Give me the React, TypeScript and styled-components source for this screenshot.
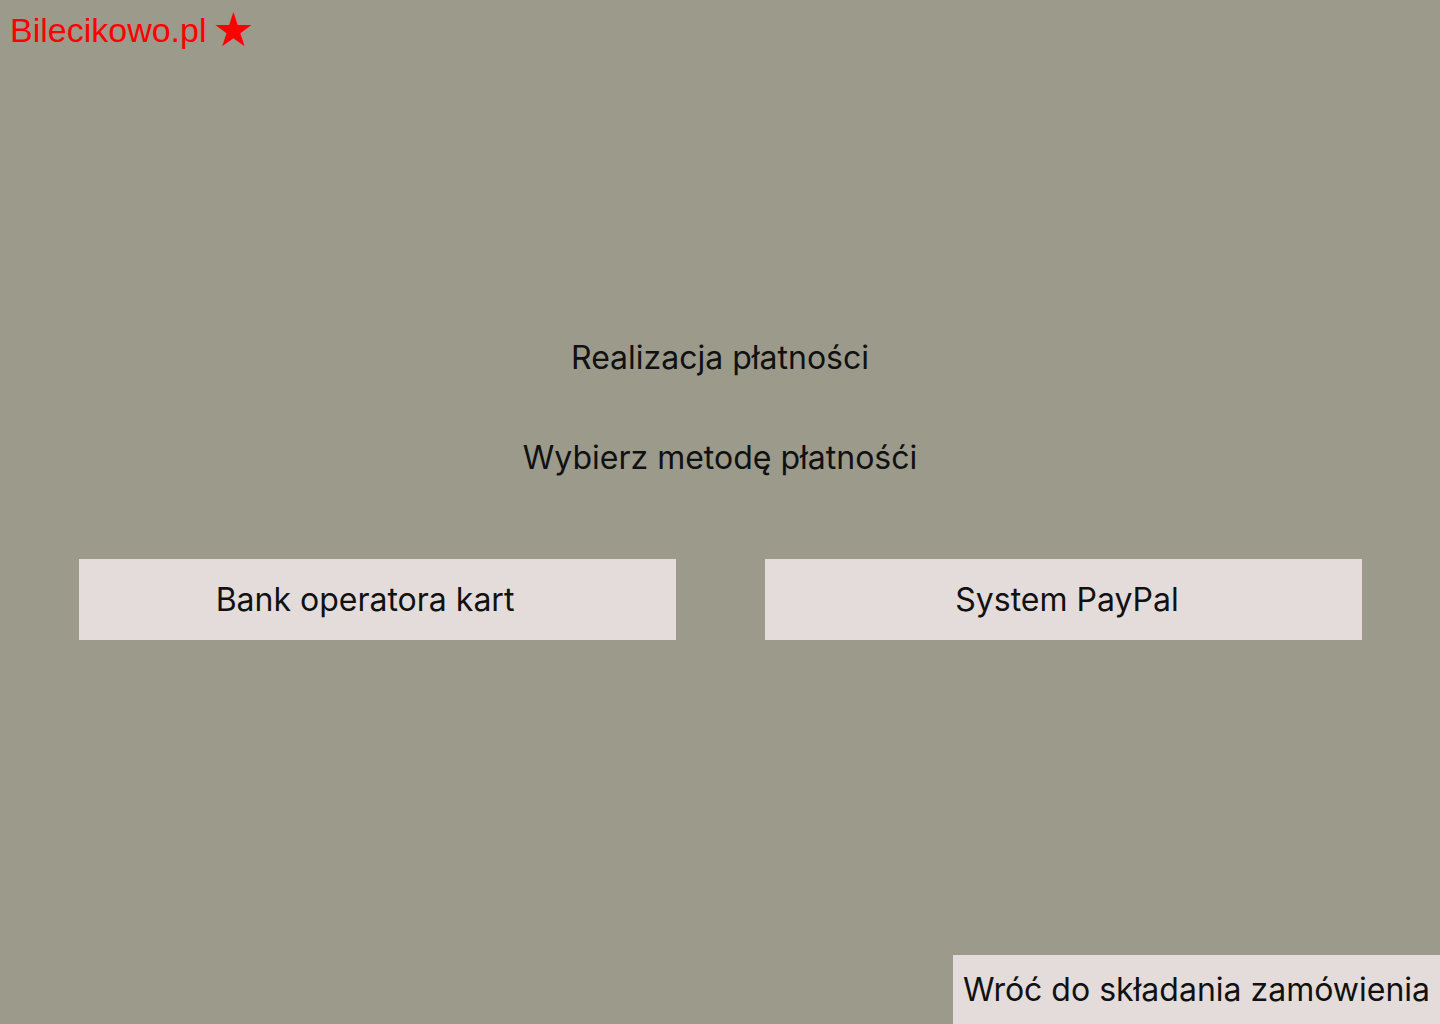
import React from "react";
import styled, { createGlobalStyle } from "styled-components";

const Global = createGlobalStyle`
  html, body { margin: 0; padding: 0; }
  body { background: #9b9a8b; }
  * { box-sizing: border-box; }
`;

const Page = styled.div`
  min-height: 1024px;
  display: flex;
  flex-direction: column;
  background: #9b9a8b;
  font-family: Inter, "Noto Sans", sans-serif;
  color: #111;
`;

const Header = styled.header`
  padding: 9px 0 0 10px;
  display: flex;
  align-items: center;
  height: 50px;
`;

const Logo = styled.a`
  font-family: "Liberation Sans", Arial, sans-serif;
  font-size: 34px;
  line-height: 40px;
  color: #ff0000;
  text-decoration: none;
  display: flex;
  align-items: center;
  gap: 6px;
`;

const Star = styled.span`
  font-family: "DejaVu Sans", sans-serif;
  font-size: 47px;
  line-height: 40px;
`;

const Main = styled.main`
  display: flex;
  flex-direction: column;
  align-items: center;
  padding-top: 288px;
`;

const Heading = styled.h1<{ $gap?: number }>`
  margin: 0 0 ${(p) => p.$gap ?? 0}px;
  font-size: 32px;
  font-weight: 400;
  line-height: 40px;
  text-align: center;
`;

const Options = styled.div`
  display: grid;
  grid-template-columns: 597px 597px;
  column-gap: 89px;
  justify-content: center;
  width: 100%;
`;

const OptionButton = styled.button<{ $shift: number }>`
  height: 81px;
  border: none;
  background: #e3dcdb;
  font-family: Inter, "Noto Sans", sans-serif;
  font-size: 32px;
  color: #111;
  cursor: pointer;
  padding: 0;
  padding-left: ${(p) => (p.$shift > 0 ? p.$shift * 2 : 0)}px;
  padding-right: ${(p) => (p.$shift < 0 ? -p.$shift * 2 : 0)}px;
`;

const Footer = styled.footer`
  margin-top: auto;
  display: flex;
  justify-content: flex-end;
`;

const BackButton = styled.button`
  height: 69px;
  border: none;
  background: #e3dcdb;
  font-family: Inter, "Noto Sans", sans-serif;
  font-size: 32px;
  color: #111;
  padding: 0 10px 0 10px;
  cursor: pointer;
`;

export default function App() {
  return (
    <>
      <Global />
      <Page>
        <Header>
          <Logo href="#">
            Bilecikowo.pl<Star>★</Star>
          </Logo>
        </Header>
        <Main>
          <Heading $gap={60}>Realizacja płatności</Heading>
          <Heading $gap={81}>Wybierz metodę płatnośći</Heading>
          <Options>
            <OptionButton $shift={-12}>Bank operatora kart</OptionButton>
            <OptionButton $shift={4}>System PayPal</OptionButton>
          </Options>
        </Main>
        <Footer>
          <BackButton>Wróć do składania zamówienia</BackButton>
        </Footer>
      </Page>
    </>
  );
}
